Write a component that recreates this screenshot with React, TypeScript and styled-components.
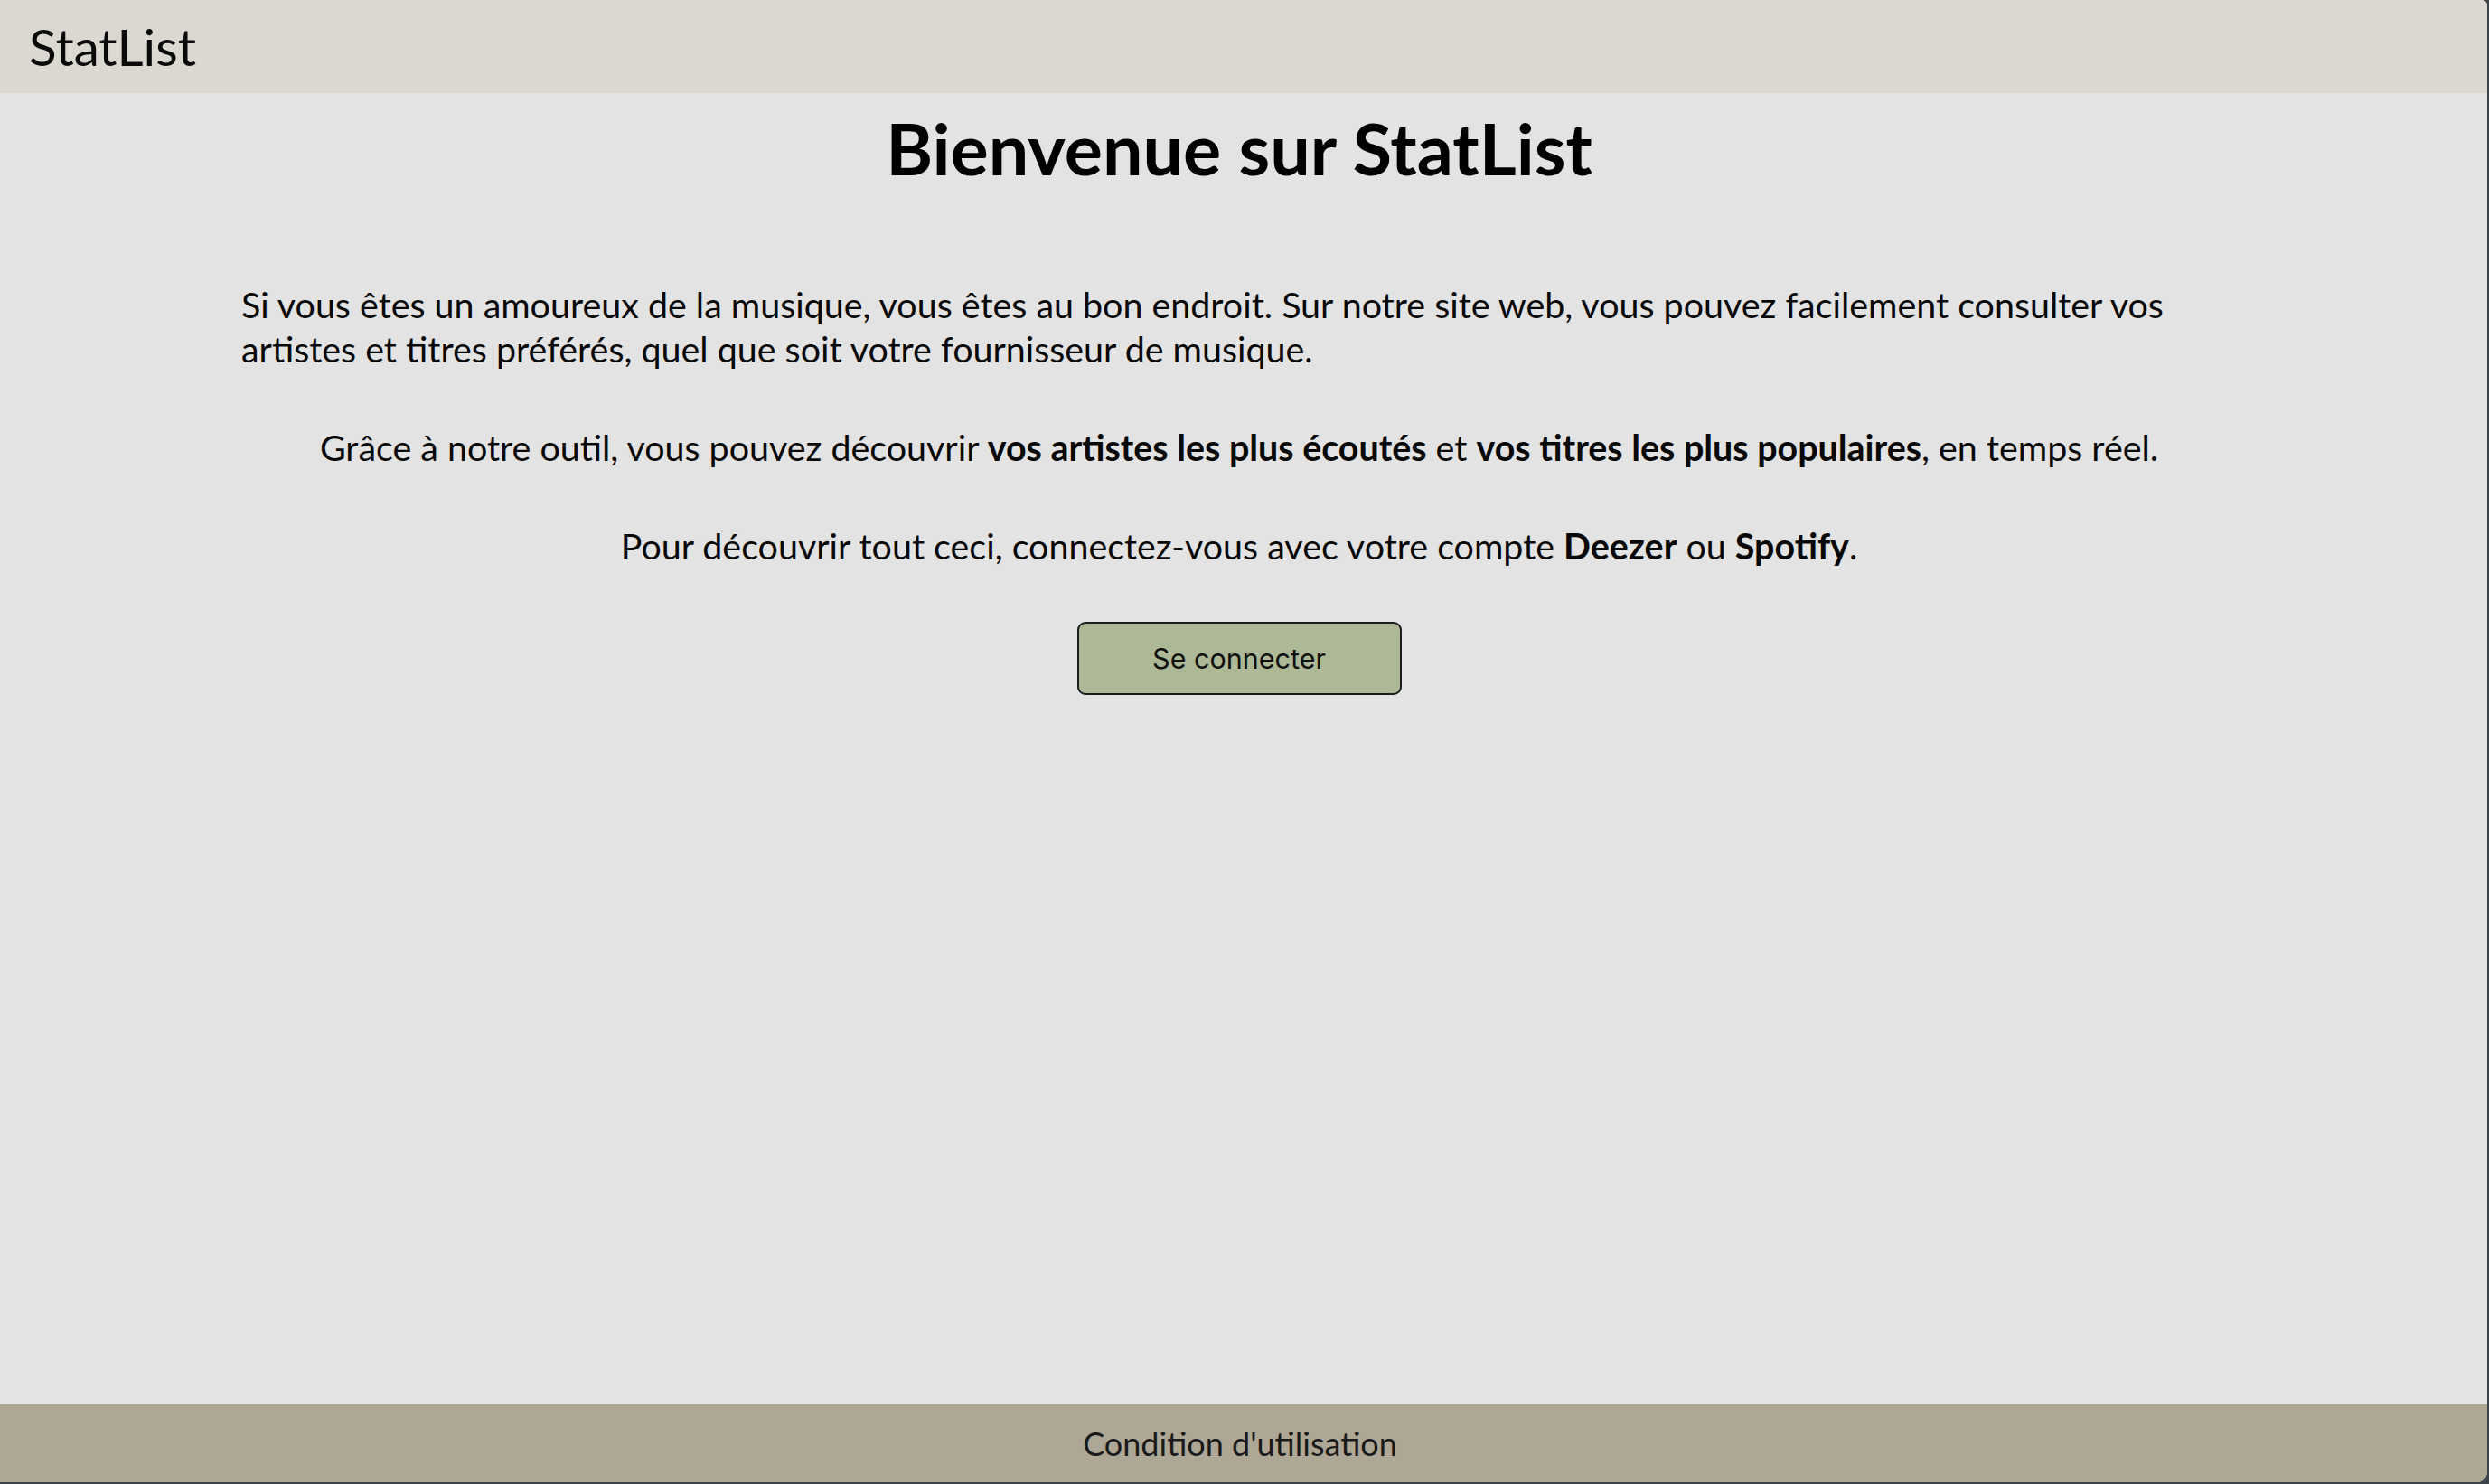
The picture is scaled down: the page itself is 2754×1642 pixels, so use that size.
import React from "react";
import styled, { createGlobalStyle } from "styled-components";

const GlobalStyle = createGlobalStyle`
  html, body {
    margin: 0;
    padding: 0;
    height: 100%;
  }
  body {
    background: #3b4449;
    font-family: Lato, "Open Sans", "Liberation Sans", sans-serif;
    color: #000;
  }
  #root {
    height: 100%;
  }
`;

const Page = styled.div`
  box-sizing: border-box;
  width: calc(100% - 2px);
  height: calc(100vh - 2px);
  display: flex;
  flex-direction: column;
  background: #e3e3e3;
  border-radius: 0 6px 12px 0;
  overflow: hidden;
`;

const Header = styled.header`
  height: 103px;
  flex: none;
  background: #dad8d0;
  display: flex;
  align-items: center;
  padding: 0 32px;
  box-sizing: border-box;
`;

const Brand = styled.div`
  font-family: Lato, sans-serif;
  font-size: 56.5px;
  font-weight: 400;
  line-height: 1;
  color: #0a0a0a;
`;

const Main = styled.main`
  flex: 1;
  display: flex;
  flex-direction: column;
  align-items: center;
  padding: 13.5px 277px 0 267px;
`;

const Title = styled.h1`
  margin: 0 0 101px;
  font-family: Lato, sans-serif;
  font-size: 79px;
  font-weight: 700;
  line-height: 1.2;
  text-align: center;
`;

const Text = styled.p<{ $align: "left" | "center" }>`
  align-self: stretch;
  margin: 0 0 60px;
  font-family: Lato, sans-serif;
  font-size: 39.4px;
  line-height: 49px;
  text-align: ${(p) => p.$align};
  color: #080808;

  strong {
    font-weight: 700;
  }
`;

const Button = styled.button`
  width: 359px;
  height: 81px;
  box-sizing: border-box;
  background: #acb896;
  border: 2.5px solid #1c1c1c;
  border-radius: 9px;
  font-family: Inter, "Liberation Sans", sans-serif;
  font-size: 30.5px;
  color: #111;
  cursor: pointer;
  padding: 0;
`;

const Footer = styled.footer`
  height: 86px;
  flex: none;
  box-sizing: border-box;
  padding-right: 8px;
  background: #aea795;
  display: flex;
  align-items: center;
  justify-content: center;
  font-family: Lato, sans-serif;
  font-size: 36px;
  color: #1a1a1a;
`;

export default function App() {
  return (
    <>
      <GlobalStyle />
      <Page>
        <Header>
          <Brand>StatList</Brand>
        </Header>
        <Main>
          <Title>Bienvenue sur StatList</Title>
          <Text $align="left">
            Si vous êtes un amoureux de la musique, vous êtes au bon endroit. Sur notre site web,
            vous pouvez facilement consulter vos artistes et titres préférés, quel que soit votre
            fournisseur de musique.
          </Text>
          <Text $align="center">
            Grâce à notre outil, vous pouvez découvrir <strong>vos artistes les plus écoutés</strong> et{" "}
            <strong>vos titres les plus populaires</strong>, en temps réel.
          </Text>
          <Text $align="center">
            Pour découvrir tout ceci, connectez-vous avec votre compte <strong>Deezer</strong> ou{" "}
            <strong>Spotify</strong>.
          </Text>
          <Button type="button">Se connecter</Button>
        </Main>
        <Footer>Condition d'utilisation</Footer>
      </Page>
    </>
  );
}
